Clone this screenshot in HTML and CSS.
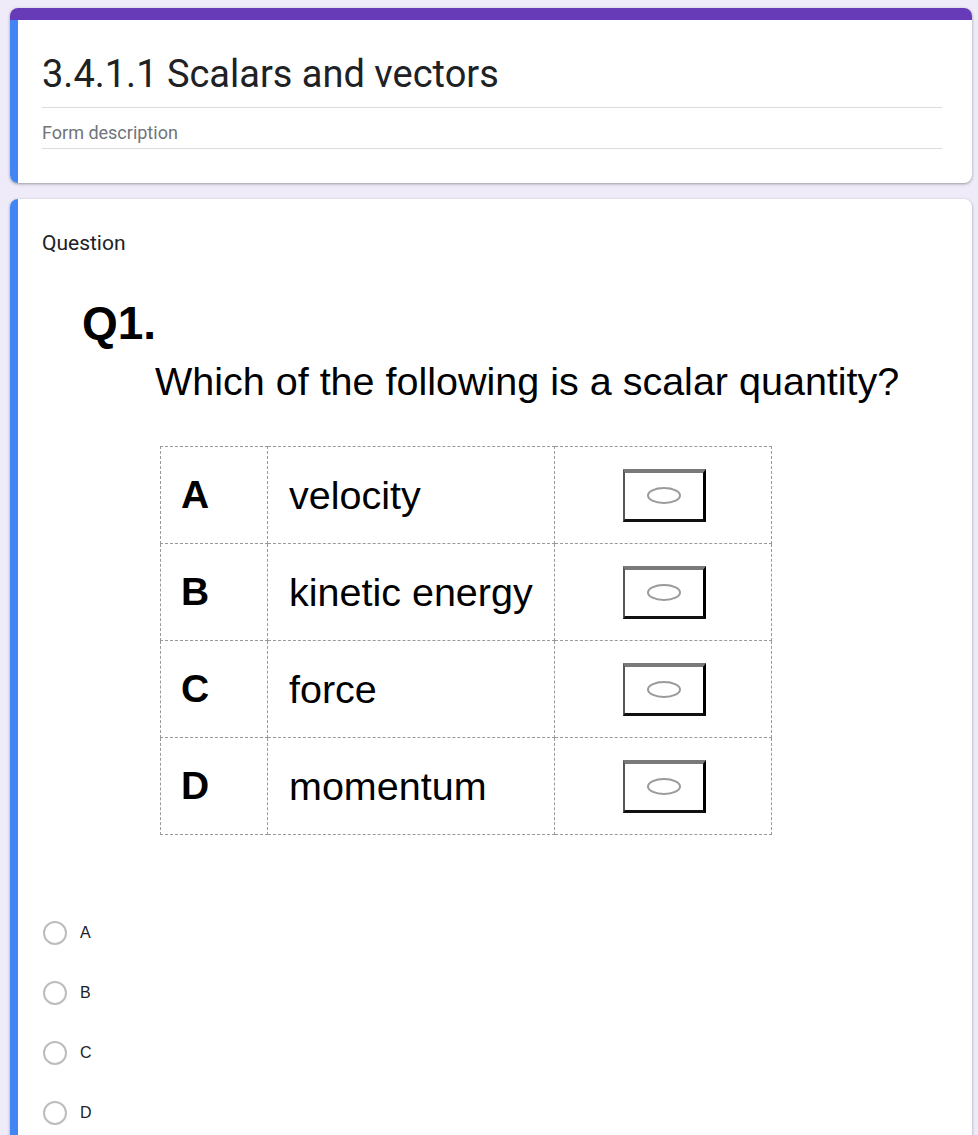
FILE: index.html
```html
<!DOCTYPE html>
<html lang="en">
<head>
    <meta charset="UTF-8">
    <meta name="viewport" content="width=device-width, initial-scale=1.0">
    <title>3.4.1.1 Scalars and vectors</title>
    <link rel="stylesheet" href="styles.css">
</head>
<body>

<!-- Form header -->
<div class="card header-card">
    <div class="card-band"></div>
    <div class="card-body">
        <div class="form-title">3.4.1.1 Scalars and vectors</div>
        <div class="form-desc">Form description</div>
    </div>
</div>

<!-- Question card -->
<div class="card question-card">
    <div class="card-body">
        <div class="question-label">Question</div>

        <div class="question-image">
            <div class="q-number">Q1.</div>
            <div class="q-text">Which of the following is a scalar quantity?</div>
            <table class="choices">
                <tr>
                    <td class="letter">A</td>
                    <td class="answer">velocity</td>
                    <td class="tick"><span class="box"><span class="oval"></span></span></td>
                </tr>
                <tr>
                    <td class="letter">B</td>
                    <td class="answer">kinetic energy</td>
                    <td class="tick"><span class="box"><span class="oval"></span></span></td>
                </tr>
                <tr>
                    <td class="letter">C</td>
                    <td class="answer">force</td>
                    <td class="tick"><span class="box"><span class="oval"></span></span></td>
                </tr>
                <tr>
                    <td class="letter">D</td>
                    <td class="answer">momentum</td>
                    <td class="tick"><span class="box"><span class="oval"></span></span></td>
                </tr>
            </table>
        </div>

        <div class="options">
            <div class="option"><span class="radio"></span><span class="option-text">A</span></div>
            <div class="option"><span class="radio"></span><span class="option-text">B</span></div>
            <div class="option"><span class="radio"></span><span class="option-text">C</span></div>
            <div class="option"><span class="radio"></span><span class="option-text">D</span></div>
        </div>
    </div>
</div>

</body>
</html>
```

FILE: styles.css
```css
body {
    font-family: Roboto, Arial, sans-serif;
    margin: 0;
    padding: 8px 6px 0 10px;
    background-color: #f0ebf8;
    color: #202124;
}
.card {
    background-color: white;
    border-radius: 8px;
    overflow: hidden;
    box-shadow: 0 1px 2px rgba(60, 64, 67, 0.3), 0 1px 3px 1px rgba(60, 64, 67, 0.15);
}
.card-band {
    height: 12px;
    background-color: #673ab7;
}
.card-body {
    border-left: 8px solid #4285f4;
}
.header-card .card-body {
    padding: 30px 30px 34px 24px;
}
.form-title {
    font-size: 38px;
    line-height: 48px;
    padding-bottom: 9px;
    border-bottom: 1px solid #dadce0;
}
.form-desc {
    font-size: 18px;
    line-height: 24px;
    color: #70757a;
    padding: 13px 0 3px;
    border-bottom: 1px solid #dadce0;
}
.question-card {
    margin-top: 16px;
    border-radius: 8px 8px 0 0;
}
.question-card .card-body {
    padding: 30px 24px 0 24px;
}
.question-label {
    font-size: 21px;
    line-height: 28px;
}
.question-image {
    font-family: "Liberation Sans", Arial, sans-serif;
    color: #000;
    padding: 41px 0 0 40px;
}
.q-number {
    font-size: 46px;
    font-weight: bold;
    line-height: 50px;
}
.q-text {
    font-size: 39.5px;
    line-height: 50px;
    margin: 8px 0 0 73px;
}
.choices {
    border-collapse: collapse;
    margin: 40px 0 0 78px;
}
.choices td {
    border: 1px dashed #9a9a9a;
    height: 96px;
    padding: 0;
}
.letter {
    width: 107px;
    font-size: 39px;
    font-weight: bold;
    padding-left: 20px !important;
    box-sizing: border-box;
}
.answer {
    width: 287px;
    font-size: 39.5px;
    padding-left: 21px !important;
    box-sizing: border-box;
}
.tick {
    width: 216px;
    text-align: center;
}
.box {
    display: inline-flex;
    justify-content: center;
    align-items: center;
    width: 78px;
    height: 46px;
    border-top: 4px solid #7a7a7a;
    border-right: 3px solid #000;
    border-bottom: 3px solid #111;
    border-left: 2px solid #555;
    vertical-align: middle;
    margin-left: 2px;
}
.oval {
    width: 30px;
    height: 13px;
    border: 2px solid #9a9a9a;
    border-radius: 50%;
}
.options {
    padding: 68px 0 0 1px;
}
.option {
    display: flex;
    align-items: center;
    height: 60px;
}
.radio {
    width: 20px;
    height: 20px;
    border: 2px solid #bdbdbd;
    border-radius: 50%;
}
.option-text {
    font-family: "Liberation Sans", Arial, sans-serif;
    font-size: 16px;
    margin-left: 13px;
}
```
